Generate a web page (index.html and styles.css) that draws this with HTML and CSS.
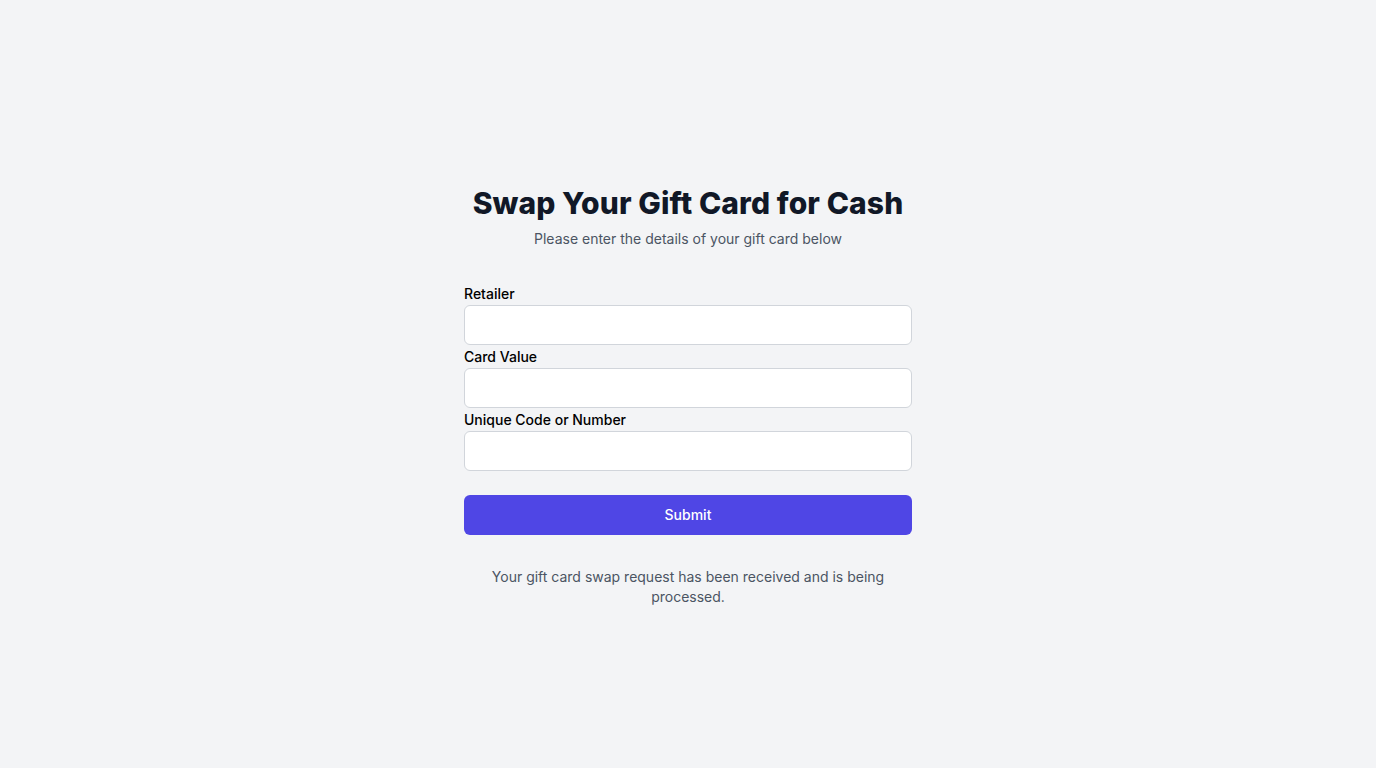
FILE: index.html
```html
<!DOCTYPE html>
<html lang="en">
<head>
<meta charset="utf-8">
<title>Swap Your Gift Card for Cash</title>
<link rel="stylesheet" href="styles.css">
</head>
<body>
<main class="page">
  <div class="panel">
    <h1 class="title">Swap Your Gift Card for Cash</h1>
    <p class="subtitle">Please enter the details of your gift card below</p>
    <form class="form">
      <div class="field">
        <label class="label" for="retailer">Retailer</label>
        <input class="input" id="retailer" type="text">
      </div>
      <div class="field">
        <label class="label" for="value">Card Value</label>
        <input class="input" id="value" type="text">
      </div>
      <div class="field">
        <label class="label" for="code">Unique Code or Number</label>
        <input class="input" id="code" type="text">
      </div>
      <button class="submit" type="button">Submit</button>
    </form>
    <p class="message">Your gift card swap request has been received and is being processed.</p>
  </div>
</main>
</body>
</html>
```
FILE: styles.css
```css
* { box-sizing: border-box; }
html, body { margin: 0; padding: 0; }
body {
  background: #f3f4f6;
  font-family: Inter, "Noto Sans", sans-serif;
  color: #111827;
}
.page {
  min-height: 768px;
  display: flex;
  justify-content: center;
  padding-top: 185px;
}
.panel {
  width: 448px;
  display: flex;
  flex-direction: column;
}
.title {
  margin: 0;
  font-size: 30px;
  line-height: 36px;
  font-weight: 800;
  letter-spacing: 0.1px;
  text-align: center;
  color: #111827;
}
.subtitle {
  margin: 8px 0 0;
  font-size: 14px;
  line-height: 20px;
  text-align: center;
  color: #4b5563;
}
.form {
  margin-top: 34px;
  display: flex;
  flex-direction: column;
}
.field {
  display: flex;
  flex-direction: column;
  gap: 1px;
  margin-bottom: 1px;
}
.label {
  padding-top: 1px;
  font-size: 14px;
  line-height: 20px;
  font-weight: 500;
  color: #000;
}
.input {
  height: 40px;
  width: 100%;
  border: 1px solid #d1d5db;
  border-radius: 6px;
  background: #fff;
  font: inherit;
  padding: 0 12px;
}
.submit {
  margin-top: 23px;
  height: 40px;
  border: none;
  border-radius: 6px;
  background: #4f46e5;
  color: #fff;
  font-family: inherit;
  font-size: 14px;
  font-weight: 500;
  line-height: 20px;
}
.message {
  margin: 32px 0 0;
  font-size: 14px;
  line-height: 20px;
  text-align: center;
  color: #4b5563;
}
```
